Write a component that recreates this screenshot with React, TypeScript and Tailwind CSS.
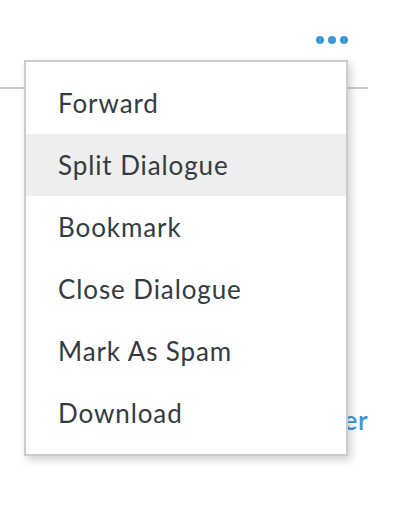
// 对话操作下拉菜单 —— 浅色配色。
const items = ['Forward', 'Split Dialogue', 'Bookmark', 'Close Dialogue', 'Mark As Spam', 'Download'];

export default function App() {
  return (
    <div
      className="relative h-[512px] w-[412px] overflow-hidden bg-white"
      style={{ fontFamily: 'Lato, "Noto Sans", sans-serif' }}
    >
      {/* 顶部栏：右侧三个蓝点 + 底部分隔线 */}
      <div className="flex h-[89px] w-[368px] items-start justify-end border-b-2 border-[#cccccc] pr-[20px] pt-[36px]">
        <div className="flex gap-[4px]">
          <span className="h-[8px] w-[8px] rounded-full bg-[#3d96d6]" />
          <span className="h-[8px] w-[8px] rounded-full bg-[#3d96d6]" />
          <span className="h-[8px] w-[8px] rounded-full bg-[#3d96d6]" />
        </div>
      </div>

      {/* 被菜单挡住的正文链接 */}
      <div className="mt-[316px] w-[368px] text-right text-[26px] font-semibold leading-[30px] tracking-[0.5px] text-[#3d96d6]">
        Answer
      </div>

      {/* 下拉菜单 */}
      <div className="absolute left-[24px] top-[60px] w-[324px] border-2 border-[#cccccc] bg-white py-[10px] shadow-[3px_4px_8px_rgba(0,0,0,0.18)]">
        {items.map((label) => (
          <div
            key={label}
            className={`flex h-[62px] items-center pl-[32px] text-[26px] tracking-[0.9px] text-[#343b3f] ${
              label === 'Split Dialogue' ? 'bg-[#eeeeee]' : ''
            }`}
          >
            {label}
          </div>
        ))}
      </div>
    </div>
  );
}
